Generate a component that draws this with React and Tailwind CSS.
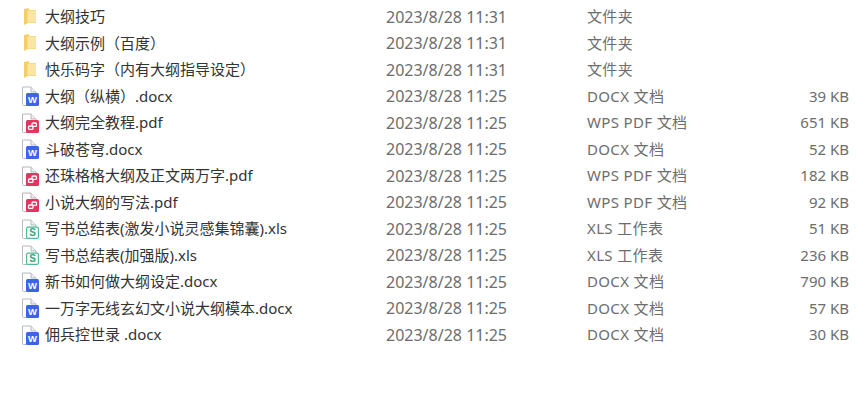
const files = [
  { name: '大纲技巧', date: '2023/8/28 11:31', type: '文件夹', size: '', icon: 'folder' },
  { name: '大纲示例（百度）', date: '2023/8/28 11:31', type: '文件夹', size: '', icon: 'folder' },
  { name: '快乐码字（内有大纲指导设定）', date: '2023/8/28 11:31', type: '文件夹', size: '', icon: 'folder' },
  { name: '大纲（纵横）.docx', date: '2023/8/28 11:25', type: 'DOCX 文档', size: '39 KB', icon: 'word' },
  { name: '大纲完全教程.pdf', date: '2023/8/28 11:25', type: 'WPS PDF 文档', size: '651 KB', icon: 'pdf' },
  { name: '斗破苍穹.docx', date: '2023/8/28 11:25', type: 'DOCX 文档', size: '52 KB', icon: 'word' },
  { name: '还珠格格大纲及正文两万字.pdf', date: '2023/8/28 11:25', type: 'WPS PDF 文档', size: '182 KB', icon: 'pdf' },
  { name: '小说大纲的写法.pdf', date: '2023/8/28 11:25', type: 'WPS PDF 文档', size: '92 KB', icon: 'pdf' },
  { name: '写书总结表(激发小说灵感集锦囊).xls', date: '2023/8/28 11:25', type: 'XLS 工作表', size: '51 KB', icon: 'xls' },
  { name: '写书总结表(加强版).xls', date: '2023/8/28 11:25', type: 'XLS 工作表', size: '236 KB', icon: 'xls' },
  { name: '新书如何做大纲设定.docx', date: '2023/8/28 11:25', type: 'DOCX 文档', size: '790 KB', icon: 'word' },
  { name: '一万字无线玄幻文小说大纲模本.docx', date: '2023/8/28 11:25', type: 'DOCX 文档', size: '57 KB', icon: 'word' },
  { name: '佣兵控世录 .docx', date: '2023/8/28 11:25', type: 'DOCX 文档', size: '30 KB', icon: 'word' },
];

function FolderIcon() {
  return (
    <svg width="20" height="20" viewBox="0 0 20 20">
      <path d="M4 2 L8.5 1 L9.5 3 L16 3 L16 16 L8 16 L4 18 Z" fill="#f4cf68" />
      <path d="M7.5 3.5 L16 3.5 L16 15.5 L7.5 15.5 Z" fill="#fbe5a2" />
    </svg>
  );
}

function DocIcon({ paper, children }) {
  return (
    <svg width="20" height="20" viewBox="0 0 20 20">
      <path d="M2.5 1 H11 L16 6 V18.5 Q16 19.5 15 19.5 H3.5 Q2.5 19.5 2.5 18.5 Z" fill="#fff" stroke={paper} />
      <path d="M11 1 V6 H16" fill="#eef0f2" stroke={paper} />
      {children}
    </svg>
  );
}

function FileIcon({ kind }) {
  if (kind === 'folder') return <FolderIcon />;
  if (kind === 'word') {
    return (
      <DocIcon paper="#b4bac4">
        <rect x="6" y="7" width="13" height="13" rx="1.5" fill="#3d63ea" />
        <text x="12.5" y="16.8" textAnchor="middle" fontSize="9.5" fontWeight="700" fill="#fff" fontFamily="Liberation Sans, sans-serif">W</text>
      </DocIcon>
    );
  }
  if (kind === 'pdf') {
    return (
      <DocIcon paper="#b9b4b8">
        <rect x="6" y="7" width="13" height="13" rx="1.5" fill="#e5345f" />
        <rect x="12" y="10" width="4.5" height="3.4" rx="1.2" fill="none" stroke="#fff" strokeWidth="1.3" />
        <rect x="8.5" y="13" width="4.5" height="3.4" rx="1.2" fill="none" stroke="#fff" strokeWidth="1.3" />
      </DocIcon>
    );
  }
  return (
    <DocIcon paper="#b5bcb9">
      <rect x="6.6" y="8.1" width="11.8" height="11.3" rx="1.5" fill="#fff" stroke="#4fbb94" strokeWidth="1.2" />
      <text x="12.5" y="17" textAnchor="middle" fontSize="10" fontWeight="700" fill="#2fa67c" fontFamily="Liberation Sans, sans-serif">S</text>
    </DocIcon>
  );
}

export default function App() {
  return (
    <div className="h-[415px] w-[860px] overflow-hidden bg-white pt-[3.4px] text-[15px] font-['Noto_Sans','Noto_Sans_CJK_SC',sans-serif]">
      {files.map((f) => (
        <div key={f.name} className="flex h-[26.5px] items-center">
          <div className="ml-[20px] flex w-[366px] items-center gap-[5px] text-[#333]">
            <FileIcon kind={f.icon} />
            <span className="whitespace-pre">{f.name}</span>
          </div>
          <div className="w-[201px] text-[16px] text-[#6d6d6d]">{f.date}</div>
          <div className="w-[190px] tracking-[0.35px] text-[#6d6d6d]">{f.type}</div>
          <div className="w-[72px] text-right text-[#6d6d6d]">{f.size}</div>
        </div>
      ))}
    </div>
  );
}
